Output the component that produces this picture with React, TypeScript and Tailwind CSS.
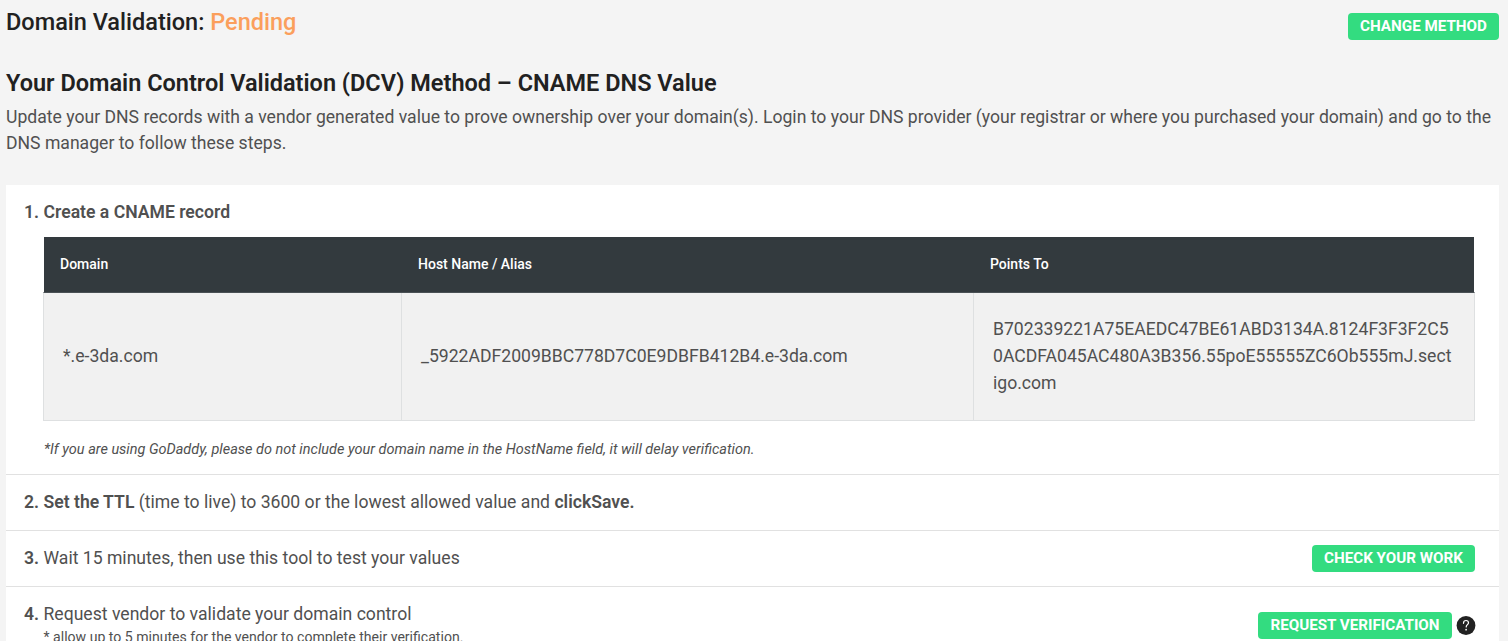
import { ReactNode } from "react"

interface ActionButtonProps {
    children: ReactNode
    className?: string
}

const ActionButton = ({ children, className = "" }: ActionButtonProps) => (
    <button
        className={`flex h-[27px] shrink-0 items-center justify-center rounded-[4px] bg-[#33dc80] text-[15.2px] font-bold uppercase leading-[27px] whitespace-nowrap text-white ${className}`}
    >
        {children}
    </button>
)

interface StepProps {
    number: number
    children: ReactNode
}

const StepTitle = ({ number, children }: StepProps) => (
    <div className="flex whitespace-nowrap">
        <span className="w-[19.5px] shrink-0 font-semibold">{number}.</span>
        <span>{children}</span>
    </div>
)

const HelpIcon = () => (
    <svg viewBox="0 0 20 20" className="h-5 w-5 shrink-0" fill="none">
        <circle cx="10" cy="9.5" r="9.4" fill="#222222" />
        <path
            d="M7.5 7.3c0-1.8 1-2.8 2.5-2.8s2.5.9 2.5 2.3c0 1.8-2.3 2-2.3 4.2"
            stroke="#ffffff"
            strokeWidth="1.2"
            strokeLinecap="round"
        />
        <circle cx="10.1" cy="13.7" r="0.85" fill="#ffffff" />
    </svg>
)

const records = [
    {
        domain: "*.e-3da.com",
        host: "_5922ADF2009BBC778D7C0E9DBFB412B4.e-3da.com",
        pointsTo: "B702339221A75EAEDC47BE61ABD3134A.8124F3F3F2C50ACDFA045AC480A3B356.55poE55555ZC6Ob555mJ.sectigo.com",
    },
]

const RecordsTable = () => (
    <div className="ml-[19px] w-[1432px]">
        <div className="mx-px grid h-[55px] grid-cols-[358px_572px_500px] items-center bg-[#333a3e] pb-[2px] text-sm font-medium text-white">
            <span className="pl-4">Domain</span>
            <span className="pl-4">Host Name / Alias</span>
            <span className="pl-4">Points To</span>
        </div>
        {records.map(({ domain, host, pointsTo }) => (
            <div
                key={domain}
                className="grid h-[129px] grid-cols-[357px_572px_501px] border border-[#dee0e1] border-t-[#4a5155] bg-[#f1f1f1] leading-[27px]"
            >
                <div className="flex items-center pb-px pl-[19px]">{domain}</div>
                <div className="flex items-center border-l border-[#dee0e1] pb-px pl-[19px]">{host}</div>
                <div className="flex items-center border-l border-[#dee0e1] px-[19px] pb-px">
                    <p className="min-w-0 break-all">{pointsTo}</p>
                </div>
            </div>
        ))}
    </div>
)

export default function App() {
    return (
        <main className="h-[641px] overflow-hidden bg-[#f4f4f4] pr-[9px] pl-[6px] font-['Roboto',sans-serif] text-[17.6px] leading-[27px] text-[#505050]">
            <header className="flex h-[67px] items-start justify-between">
                <h1 className="pt-2 text-[23.5px] leading-7 font-medium text-[#212121]">
                    Domain Validation: <span className="text-[#fb9f5c]">Pending</span>
                </h1>
                <ActionButton className="mt-[13px] w-[151px]">Change Method</ActionButton>
            </header>

            <section className="h-[118px]">
                <h2 className="pt-[2px] text-[23.5px] leading-7 font-semibold text-[#212121]">
                    Your Domain Control Validation (DCV) Method – CNAME DNS Value
                </h2>
                <p className="mt-[7px] leading-[26px]">
                    Update your DNS records with a vendor generated value to prove ownership over your domain(s). Login
                    to your DNS provider (your registrar or where you purchased your domain) and go to the DNS manager
                    to follow these steps.
                </p>
            </section>

            <section className="bg-white">
                <div className="h-[290px] border-b border-[#e1e1e1] pt-3.5 pl-[18px]">
                    <div className="mb-[11px] font-semibold">
                        <StepTitle number={1}>Create a CNAME record</StepTitle>
                    </div>
                    <RecordsTable />
                    <p className="mt-[18px] ml-[20px] text-[14.48px] leading-[21px] italic">
                        *If you are using GoDaddy, please do not include your domain name in the HostName field, it will
                        delay verification.
                    </p>
                </div>
                <div className="flex h-14 items-center border-b border-[#e1e1e1] pl-[18px]">
                    <StepTitle number={2}>
                        <b className="font-semibold">Set the TTL</b> (time to live) to 3600 or the lowest allowed value
                        and <b className="font-semibold">clickSave.</b>
                    </StepTitle>
                </div>
                <div className="flex h-14 items-center justify-between border-b border-[#e1e1e1] pr-[24px] pl-[18px]">
                    <StepTitle number={3}>Wait 15 minutes, then use this tool to test your values</StepTitle>
                    <ActionButton className="w-[163px]">Check Your Work</ActionButton>
                </div>
                <div className="flex h-[72px] items-start justify-between pr-[23px] pl-[18px]">
                    <div className="pt-3.5">
                        <StepTitle number={4}>Request vendor to validate your domain control</StepTitle>
                        <p className="ml-[19.5px] text-[14.08px] leading-[18px]">
                            * allow up to 5 minutes for the vendor to complete their verification.
                        </p>
                    </div>
                    <div className="flex items-center gap-[4px] pt-[25px]">
                        <ActionButton className="w-[194px]">Request Verification</ActionButton>
                        <HelpIcon />
                    </div>
                </div>
            </section>
        </main>
    )
}
